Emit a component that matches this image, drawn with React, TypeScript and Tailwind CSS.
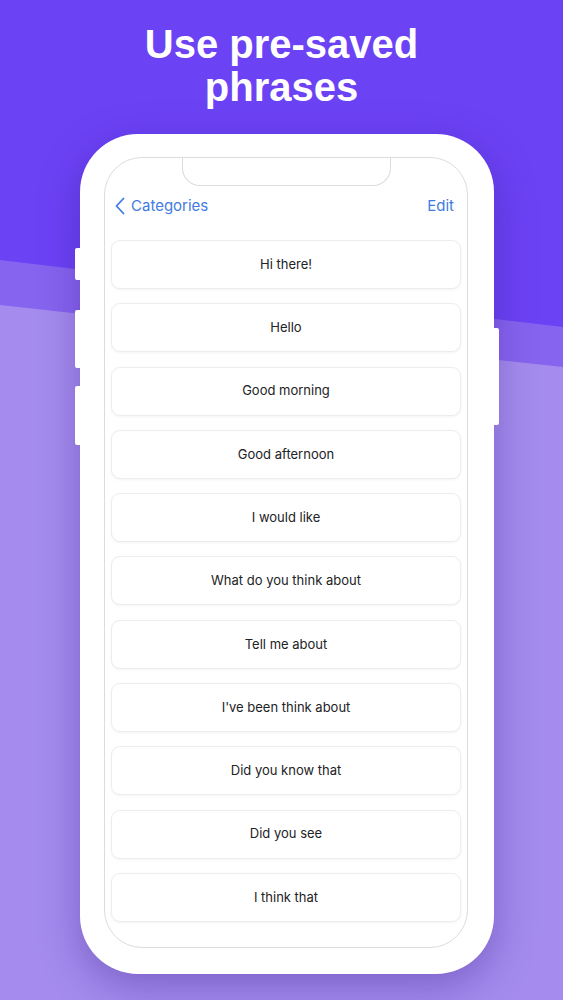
import React from 'react';

const phrases = [
  'Hi there!',
  'Hello',
  'Good morning',
  'Good afternoon',
  'I would like',
  'What do you think about',
  'Tell me about',
  "I've been think about",
  'Did you know that',
  'Did you see',
  'I think that',
];

const ChevronLeft = () => (
  <svg width="10" height="18" viewBox="0 0 10 18" fill="none">
    <path d="M8.5 1.5L1.5 9l7 7.5" stroke="#3f7be0" strokeWidth="1.8" strokeLinecap="round" strokeLinejoin="round" />
  </svg>
);

const PhraseCard: React.FC<{ text: string }> = ({ text }) => (
  <div className="h-[49px] flex items-center justify-center rounded-[9px] bg-white border border-[#ededf1] shadow-[0_1px_3px_rgba(0,0,0,0.05)]">
    <span className="text-[13px] text-[#222224] font-['Inter',sans-serif]">{text}</span>
  </div>
);

export default function App() {
  return (
    <div className="relative w-[563px] h-[1000px] overflow-hidden bg-[#6c42f5]">
      {/* background bands */}
      <svg className="absolute inset-0" width="563" height="1000" viewBox="0 0 563 1000">
        <polygon points="0,260 563,327 563,1000 0,1000" fill="#8764ef" />
        <polygon points="0,305 563,367 563,1000 0,1000" fill="#a48bed" />
      </svg>

      <div className="relative flex flex-col">
        <h1 className="pt-[23px] text-center text-white font-bold text-[40px] leading-[43px] font-['Liberation_Sans',Arial,sans-serif]">
          Use pre-saved
          <br />
          phrases
        </h1>

        {/* phone */}
        <div className="relative mt-[25px] ml-[80px] w-[414px] h-[840px]">
          <div className="relative h-full rounded-[58px] bg-white pl-[24px] pr-[26px] pt-[23px] pb-[26px] shadow-[0_12px_40px_rgba(50,20,130,0.35)]">
            <div className="relative h-full rounded-[38px] border border-[#dcdce0] bg-white overflow-hidden">
              {/* notch */}
              <div className="absolute top-[-1px] left-[77px] w-[209px] h-[29px] bg-white border border-t-0 border-[#dcdce0] rounded-b-[18px]" />

              <div className="flex flex-col px-[6px] pt-[36px]">
                <div className="h-[24px] flex items-center justify-between pl-[4px] pr-[7px] font-['Inter',sans-serif] text-[15px] text-[#3f7be0]">
                  <div className="flex items-center gap-[6px]">
                    <ChevronLeft />
                    <span>Categories</span>
                  </div>
                  <span>Edit</span>
                </div>
                <div className="mt-[22px] flex flex-col gap-[14.3px]">
                  {phrases.map((p) => (
                    <PhraseCard key={p} text={p} />
                  ))}
                </div>
              </div>
            </div>
          </div>

          {/* side buttons */}
          <div className="absolute left-[-5px] top-[114px] w-[6px] h-[32px] rounded-l-[2px] bg-white" />
          <div className="absolute left-[-5px] top-[176px] w-[6px] h-[58px] rounded-l-[2px] bg-white" />
          <div className="absolute left-[-5px] top-[252px] w-[6px] h-[59px] rounded-l-[2px] bg-white" />
          <div className="absolute right-[-5px] top-[194px] w-[6px] h-[97px] rounded-r-[2px] bg-white" />
        </div>
      </div>
    </div>
  );
}
